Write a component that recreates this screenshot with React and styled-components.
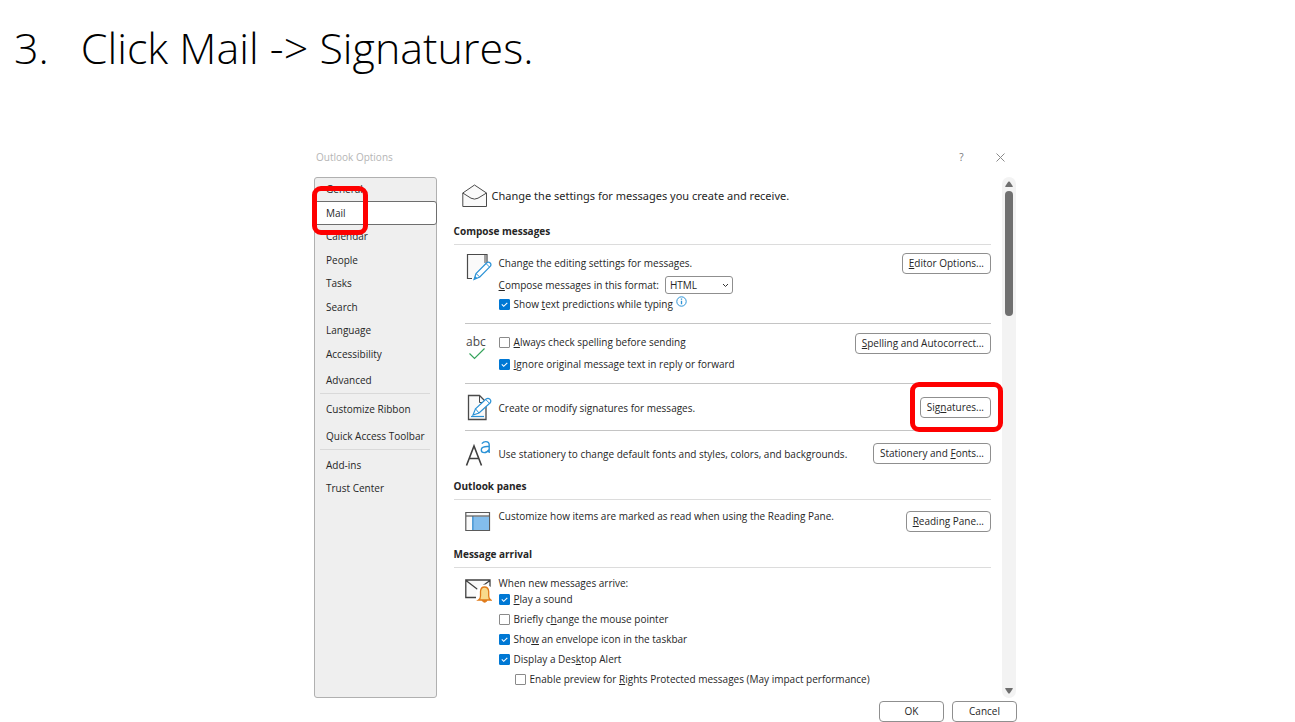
import React from 'react';
import styled, { createGlobalStyle } from 'styled-components';

const App = () => {
  return (
    <>
      <GlobalStyle />
      <Pagina>
        <Paso>
          <span>3.</span>
          <span>Click Mail -&gt; Signatures.</span>
        </Paso>

        <Dialogo aria-label="Outlook Options">
          <BarraTitulo>
            <h2>Outlook Options</h2>
            <BotonBarra aria-label="Help">?</BotonBarra>
            <BotonBarra aria-label="Close">
              <svg width="9" height="9" viewBox="0 0 9 9" fill="none" stroke="#8a8a8a">
                <path d="M0.5 0.5L8.5 8.5M8.5 0.5L0.5 8.5" />
              </svg>
            </BotonBarra>
          </BarraTitulo>

          <Cuerpo>
            <Menu>
              <GrupoMenu>
                <ItemMenu>General</ItemMenu>
                <ItemActivo>
                  <ItemMenu $activo aria-current="page">Mail</ItemMenu>
                  <MarcaMail />
                </ItemActivo>
                <ItemMenu>Calendar</ItemMenu>
                <ItemMenu>People</ItemMenu>
                <ItemMenu>Tasks</ItemMenu>
                <ItemMenu>Search</ItemMenu>
                <ItemMenu>Language</ItemMenu>
                <ItemMenu>Accessibility</ItemMenu>
              </GrupoMenu>
              <ItemMenu $alto>Advanced</ItemMenu>
              <Separador $abajo={1} />
              <ItemMenu $alto>Customize Ribbon</ItemMenu>
              <ItemMenu $alto>Quick Access Toolbar</ItemMenu>
              <Separador $abajo={3} />
              <ItemMenu>Add-ins</ItemMenu>
              <ItemMenu>Trust Center</ItemMenu>
            </Menu>

            <Panel>
              <Encabezado>
                <IconoSobre />
                <span>Change the settings for messages you create and receive.</span>
              </Encabezado>

              <TituloSeccion>Compose messages</TituloSeccion>
              <Fila $arriba={8} $abajo={11} $linea>
                <IconoEditor />
                <Lineas>
                  <Texto $alto={21}>Change the editing settings for messages.</Texto>
                  <Formato>
                    <label htmlFor="formato"><u>C</u>ompose messages in this format:</label>
                    <CajaSelect>
                      <select id="formato" defaultValue="HTML">
                        <option>HTML</option>
                        <option>Rich Text</option>
                        <option>Plain Text</option>
                      </select>
                      <svg width="7" height="5" viewBox="0 0 7 5" fill="none" stroke="#333">
                        <path d="M1 1L3.5 3.5L6 1" />
                      </svg>
                    </CajaSelect>
                  </Formato>
                  <Prediccion>
                    <Casilla id="prediccion" marcada>Show <u>t</u>ext predictions while typing</Casilla>
                    <IconoInfo />
                  </Prediccion>
                </Lineas>
                <Boton><u>E</u>ditor Options...</Boton>
              </Fila>

              <Fila $arriba={9} $abajo={11} $linea>
                <IconoOrtografia />
                <Lineas $espacio={6} $arriba={1}>
                  <Casilla id="ortografia"><u>A</u>lways check spelling before sending</Casilla>
                  <Casilla id="ignorar" marcada><u>I</u>gnore original message text in reply or forward</Casilla>
                </Lineas>
                <Boton><u>S</u>pelling and Autocorrect...</Boton>
              </Fila>

              <Fila $arriba={10} $abajo={9} $linea $centro>
                <IconoFirma />
                <Texto>Create or modify signatures for messages.</Texto>
                <Destacado>
                  <Boton>Sig<u>n</u>atures...</Boton>
                  <MarcaFirmas />
                </Destacado>
              </Fila>

              <Fila $arriba={9} $abajo={11} $centro>
                <IconoFuentes />
                <Texto>Use stationery to change default fonts and styles, colors, and backgrounds.</Texto>
                <Boton>Stationery and <u>F</u>onts...</Boton>
              </Fila>

              <TituloSeccion>Outlook panes</TituloSeccion>
              <Fila $arriba={8} $abajo={14}>
                <IconoPanel />
                <Texto>Customize how items are marked as read when using the Reading Pane.</Texto>
                <Boton $bajo><u>R</u>eading Pane...</Boton>
              </Fila>

              <TituloSeccion>Message arrival</TituloSeccion>
              <Fila $arriba={7} $abajo={0}>
                <IconoAviso />
                <div>
                  <Texto>When new messages arrive:</Texto>
                  <Lineas $espacio={4}>
                    <Casilla id="sonido" marcada><u>P</u>lay a sound</Casilla>
                    <Casilla id="puntero">Briefly c<u>h</u>ange the mouse pointer</Casilla>
                    <Casilla id="sobre" marcada>Sho<u>w</u> an envelope icon in the taskbar</Casilla>
                    <Casilla id="alerta" marcada>Display a Des<u>k</u>top Alert</Casilla>
                    <Casilla id="vista" anidada>
                      Enable preview for <u>R</u>ights Protected messages (May impact performance)
                    </Casilla>
                  </Lineas>
                </div>
              </Fila>
            </Panel>

            <BarraScroll aria-hidden="true">
              <svg width="8" height="7" viewBox="0 0 8 7" fill="#6f6f6f">
                <path d="M3.2 0.8Q4 0 4.8 0.8L7.8 5.2Q8 6 7.2 6H0.8Q0 6 0.2 5.2Z" />
              </svg>
              <Pulgar />
              <svg width="8" height="7" viewBox="0 0 8 7" fill="#6f6f6f">
                <path d="M3.2 6.2Q4 7 4.8 6.2L7.8 1.8Q8 1 7.2 1H0.8Q0 1 0.2 1.8Z" />
              </svg>
            </BarraScroll>
          </Cuerpo>

          <Pie>
            <Boton $ancho>OK</Boton>
            <Boton $ancho>Cancel</Boton>
          </Pie>
        </Dialogo>
      </Pagina>
    </>
  );
};

const Casilla = ({ id, marcada, anidada, children }) => (
  <Opcion $anidada={anidada}>
    <CajaCheck>
      <input type="checkbox" id={id} defaultChecked={marcada} />
      <svg width="11" height="11" viewBox="0 0 11 11" fill="none" stroke="#fff" strokeWidth="1.1">
        <path d="M2.8 5.4L4.7 7.3L8.3 3.8" />
      </svg>
    </CajaCheck>
    <label htmlFor={id}>{children}</label>
  </Opcion>
);

const IconoSobre = () => (
  <svg width="26" height="24" viewBox="0 0 26 24" fill="#fafafa" stroke="#4a4a4a">
    <path d="M0.8 9L12.5 1L24.5 9V22.5H0.8Z" />
    <path d="M0.8 9L9 14.2Q12.5 16 16 14.2L24.5 9" fill="none" />
  </svg>
);

const IconoEditor = () => (
  <svg width="27" height="28" viewBox="0 0 27 28" fill="none">
    <path d="M7 25.5H2.5V1.5H22V10" fill="#fafafa" stroke="#4a4a4a" strokeWidth="1.2" />
    <path d="M20 2V10" stroke="#4a4a4a" />
    <path d="M9 26.5L11 20.5L21.5 10Q23.5 8.3 25.2 10Q26.8 11.8 25 13.6L14.8 24Z" fill="#fff" stroke="#2b92d6" strokeWidth="1.2" />
    <path d="M21 10.5L24.5 14M11 20.5L14.8 24" stroke="#2b92d6" />
    <path d="M9 26.5L10.3 23L12.4 25.2Z" fill="#2b92d6" />
  </svg>
);

const IconoOrtografia = () => (
  <svg width="27" height="30" viewBox="0 -2 27 30" fill="none">
    <text x="1" y="11" fontFamily="'Open Sans', sans-serif" fontSize="12" fill="#4a4a4a">abc</text>
    <path d="M4.5 18.5L9.5 23.5L19.5 13.5" stroke="#35a35b" strokeWidth="1.2" />
  </svg>
);

const IconoFirma = () => (
  <svg width="27" height="27" viewBox="0 0 27 27" fill="none">
    <path d="M3.5 1.5H14.5L21 8V25.5H3.5Z" fill="#fafafa" stroke="#4a4a4a" strokeWidth="1.3" />
    <path d="M14.5 1.5V8.5H20" stroke="#4a4a4a" />
    <path d="M8 21L10.5 14.8L20.8 5.3Q23 3.4 24.9 5.2Q26.7 7 25 9L14 19Z" fill="#fff" stroke="#2b92d6" strokeWidth="1.2" />
    <path d="M21 5.8L24.5 9.3M10.5 14.8L14 19" stroke="#2b92d6" />
    <path d="M6 22.5H19" stroke="#2b92d6" strokeWidth="1.2" />
  </svg>
);

const IconoFuentes = () => (
  <svg width="27" height="27" viewBox="0 0 27 27" fill="none">
    <path d="M1.5 25.5L9 6L16.5 25.5M4.3 18.5H13.7" stroke="#404040" strokeWidth="1.6" />
    <path
      d="M16.8 3.6Q18.5 1.6 20.8 1.6Q24.2 1.6 24.2 5V13M24.2 6.2L20 6.8Q16.3 7.3 16.3 10Q16.3 12.6 19.2 12.6Q22.2 12.6 24.2 9.5"
      stroke="#2b92d6"
      strokeWidth="1.4"
    />
  </svg>
);

const IconoPanel = () => (
  <svg width="27" height="24" viewBox="0 0 27 24" fill="none">
    <path d="M0.8 4.5H24.5V22.5H0.8Z" fill="#fafafa" stroke="#5a5a5a" strokeWidth="1.2" />
    <path d="M8 8.5H24V22H8Z" fill="#83bdec" />
    <path d="M7.8 8V22" stroke="#2b86cc" strokeWidth="1.2" />
    <path d="M1 8H24.5" stroke="#5a5a5a" strokeWidth="1.2" />
  </svg>
);

const IconoAviso = () => (
  <svg width="27" height="28" viewBox="0 0 27 28" fill="none">
    <path d="M0.8 5H25V22.5H0.8Z" fill="#fafafa" />
    <path d="M11 22.5H0.8V5H25V12M1 5.5L12.7 14.5L25 5.5" stroke="#404040" strokeWidth="1.3" />
    <path d="M11.5 28V16Q13 9.5 19.5 9.5T27 16V28Z" fill="#fff" />
    <path d="M13.5 25Q15.5 23.8 15.5 21V16.5Q15.7 12 19.5 12T23.7 16.5V21Q23.7 23.8 25.8 25Z" fill="#f8da8c" stroke="#e07b1a" strokeWidth="1.3" />
    <path d="M17 25.5Q19.5 29 22.2 25.5Z" fill="#e07b1a" stroke="#e07b1a" />
  </svg>
);

const IconoInfo = () => (
  <svg width="11" height="11" viewBox="0 0 11 11" fill="none" stroke="#2b92d6">
    <circle cx="5.5" cy="5.5" r="4.7" />
    <path d="M5.5 4.8V8.2M5.5 2.6V3.8" strokeWidth="1.3" />
  </svg>
);

const GlobalStyle = createGlobalStyle`
  * {
    box-sizing: border-box;
  }

  body {
    margin: 0;
    background: #fff;
    color: #262626;
    font-family: 'Open Sans', 'Noto Sans', sans-serif;
    font-size: 10px;
    line-height: 16px;
  }

  button, select {
    font: inherit;
    color: inherit;
  }

  svg {
    display: block;
    flex-shrink: 0;
  }

  u {
    text-underline-offset: 1px;
  }
`;

const Pagina = styled.main`
  padding: 16px 278px 0 314px;
`;

const Paso = styled.h1`
  display: flex;
  gap: 32px;
  margin: 0 0 0 -300px;
  font-size: 43px;
  font-weight: 300;
  line-height: 64px;
  color: #000;
  white-space: nowrap;
`;

const Dialogo = styled.section`
  margin-top: 64px;
`;

const BarraTitulo = styled.header`
  display: flex;
  align-items: center;
  height: 26px;
  margin-bottom: 7px;
  padding: 0 12px 0 2px;

  h2 {
    flex: 1;
    margin: 0;
    font-size: 10px;
    font-weight: 400;
    color: #b5b5b5;
  }
`;

const BotonBarra = styled.button`
  display: flex;
  align-items: center;
  justify-content: center;
  width: 9px;
  margin-left: 30px;
  padding: 0;
  border: none;
  background: none;
  color: #777;
`;

const Cuerpo = styled.div`
  display: flex;
`;

const Menu = styled.nav`
  display: flex;
  flex-direction: column;
  flex: 0 0 122px;
  margin-right: -1px;
  border: 1px solid #b0b0b0;
  border-radius: 3px;
  background: #efefef;
`;

const GrupoMenu = styled.div`
  display: grid;
  grid-auto-rows: 1fr;
  height: 189px;
  margin-top: -1px;
`;

const ItemMenu = styled.button`
  display: block;
  width: 100%;
  height: ${({ $alto }) => ($alto ? 27 : 23)}px;
  padding: 0 10px;
  border: 1px solid ${({ $activo }) => ($activo ? '#6e6e6e' : 'transparent')};
  border-radius: 3px;
  background: ${({ $activo }) => ($activo ? '#fff' : 'none')};
  text-align: left;
  white-space: nowrap;
`;

const ItemActivo = styled.div`
  position: relative;
  margin: 0 -1px;

  ${ItemMenu} {
    height: 24px;
    padding: 0 11px;
  }
`;

const Marca = styled.span`
  position: absolute;
  z-index: 1;
  border: 5px solid #fe0000;
  border-radius: 9px;
  pointer-events: none;
`;

const MarcaMail = styled(Marca)`
  top: -15px;
  left: -2px;
  width: 56px;
  height: 49px;
`;

const MarcaFirmas = styled(Marca)`
  inset: -15px -12px -14px -10px;
`;

const Separador = styled.hr`
  width: 110px;
  margin: 0 auto ${({ $abajo }) => $abajo}px;
  border: none;
  border-top: 1px solid #d9d9d9;
`;

const Panel = styled.div`
  flex: 1;
  min-width: 0;
  padding: 7px 11px 0 18px;
`;

const Encabezado = styled.div`
  display: flex;
  align-items: center;
  gap: 4px;
  height: 24px;
  margin-bottom: 15px;
  padding-left: 8px;
  font-family: 'Noto Sans', 'Open Sans', sans-serif;
  font-size: 11px;
`;

const TituloSeccion = styled.h3`
  margin: 0;
  padding-bottom: 5px;
  border-bottom: 1px solid #dcdcdc;
  font-size: 10px;
  font-weight: 700;
`;

const Fila = styled.div`
  display: grid;
  grid-template-columns: 27px 1fr auto;
  column-gap: 7px;
  align-items: ${({ $centro }) => ($centro ? 'center' : 'start')};
  margin-left: 11px;
  padding: ${({ $arriba, $abajo }) => `${$arriba}px 0 ${$abajo}px`};
  border-bottom: ${({ $linea }) => ($linea ? '1px solid #c4c4c4' : 'none')};
`;

const Lineas = styled.div`
  display: flex;
  flex-direction: column;
  gap: ${({ $espacio }) => $espacio || 0}px;
  padding-top: ${({ $arriba }) => $arriba || 0}px;
`;

const Texto = styled.div`
  line-height: ${({ $alto }) => $alto || 16}px;
`;

const Formato = styled.div`
  display: flex;
  align-items: center;
  gap: 6px;
  margin-top: 2px;
`;

const CajaSelect = styled.div`
  position: relative;

  select {
    display: block;
    appearance: none;
    width: 68px;
    height: 18px;
    padding: 0 4px;
    border: 1px solid #8f8f8f;
    border-radius: 3px;
    background: #fff;
  }

  svg {
    position: absolute;
    top: 7px;
    right: 4px;
    pointer-events: none;
  }
`;

const Prediccion = styled.div`
  display: flex;
  gap: 3px;
  margin-top: 2px;
`;

const Opcion = styled.div`
  display: flex;
  align-items: center;
  gap: 4px;
  padding-left: ${({ $anidada }) => ($anidada ? 16 : 0)}px;
`;

const CajaCheck = styled.span`
  position: relative;

  input {
    display: block;
    appearance: none;
    width: 11px;
    height: 11px;
    margin: 0;
    border: 1px solid #8a8a8a;
    border-radius: 1px;
    background: #fff;
  }

  input:checked {
    border-color: #0078d4;
    background: #0078d4;
  }

  svg {
    position: absolute;
    top: 0;
    left: 0;
    pointer-events: none;
  }
`;

const Destacado = styled.div`
  position: relative;
`;

const Boton = styled.button`
  display: block;
  width: ${({ $ancho }) => ($ancho ? '65px' : 'auto')};
  height: 21px;
  margin-top: ${({ $bajo }) => ($bajo ? 3 : 0)}px;
  padding: 0 6px 1px;
  border: 1px solid #8f8f8f;
  border-radius: 4px;
  background: #fff;
  white-space: nowrap;
`;

const BarraScroll = styled.div`
  display: flex;
  flex-direction: column;
  align-items: center;
  width: 14px;
  height: 521px;
  margin-right: 1px;
  padding: 4px 0;
  border-radius: 7px;
  background: #f3f3f3;
`;

const Pulgar = styled.div`
  width: 8px;
  height: 125px;
  margin: 3px 0 auto;
  border-radius: 4px;
  background: #707070;
`;

const Pie = styled.footer`
  display: flex;
  justify-content: flex-end;
  gap: 8px;
  margin-top: 3px;
`;

export default App;
